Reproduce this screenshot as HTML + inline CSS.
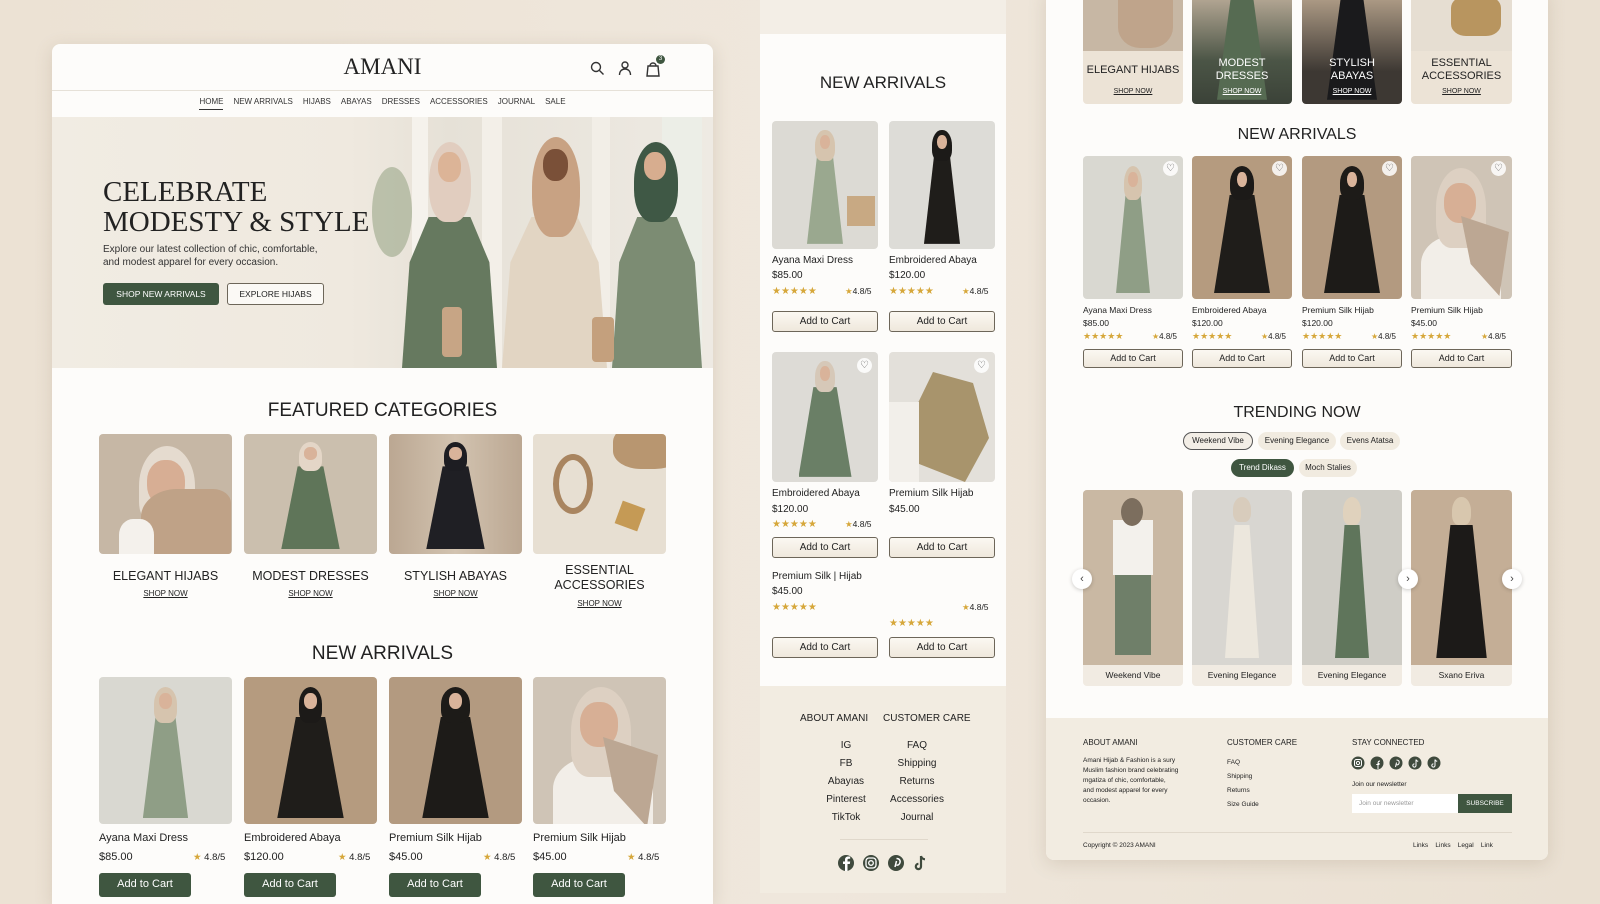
<!DOCTYPE html>
<html><head><meta charset="utf-8">
<style>
*{margin:0;padding:0;box-sizing:border-box}
body{width:1600px;height:893px;overflow:hidden;position:relative;background:linear-gradient(90deg,#ece2d4,#efe7dc 50%,#eae0d2);font-family:"Liberation Sans",sans-serif;color:#222}
.a{position:absolute}
.t{position:absolute;white-space:nowrap}
.c{text-align:center}
.panel{position:absolute;background:#fdfcfa;box-shadow:0 4px 18px rgba(120,100,70,.18)}
.img{position:absolute;overflow:hidden;border-radius:4px}
.img .d{position:absolute;left:33%;width:34%;top:27%;bottom:4%;clip-path:polygon(28% 0,72% 0,100% 100%,0 100%)}
.img .h{position:absolute;left:41%;width:18%;top:7%;height:24%;border-radius:50% 50% 35% 35%}
.img .f{position:absolute;left:45%;width:10%;top:11%;height:11%;border-radius:45%;background:#d9b39a}
.heart{position:absolute;width:15px;height:15px;border-radius:50%;background:rgba(255,255,255,.85);font-size:10px;line-height:15px;text-align:center;color:#555}
.star{color:#d6a73a}
.btn{position:absolute;border:1px solid #6d6659;border-radius:3px;background:linear-gradient(#fbf8f2,#efe8dc);font-size:10px;text-align:center}
.gbtn{position:absolute;background:#3f5640;color:#fff;border-radius:3px;text-align:center}
.nav span{margin:0 5px}
</style></head><body>

<!-- LEFT PANEL -->
<div class="panel" style="left:52px;top:44px;width:661px;height:860px;border-radius:8px 8px 0 0"></div>
<div class="t c" style="left:52px;width:661px;top:54px;font-family:'Liberation Serif',serif;font-size:23px;letter-spacing:0;color:#222">AMANI</div>
<svg class="a" style="left:590px;top:60px" width="75" height="18" viewBox="0 0 75 18" fill="none" stroke="#333" stroke-width="1.4"><circle cx="6" cy="7" r="4.5"/><path d="M9.5 10.5l4 4"/><circle cx="35" cy="5" r="3"/><path d="M29.5 15c0-4 2.5-6 5.5-6s5.5 2 5.5 6"/><path d="M58 6h10l1 10h-12z M60 6c0-4 6-4 6 0"/></svg>
<div class="a" style="left:656px;top:55px;width:9px;height:9px;border-radius:50%;background:#3f5640;color:#fff;font-size:6px;text-align:center;line-height:9px">3</div>
<div class="a" style="left:52px;top:90px;width:661px;height:1px;background:#e6e1d8"></div>
<div class="t c nav" style="left:52px;width:661px;top:97px;font-size:8px;color:#333"><span style="border-bottom:1px solid #333;padding-bottom:3px">HOME</span><span>NEW ARRIVALS</span><span>HIJABS</span><span>ABAYAS</span><span>DRESSES</span><span>ACCESSORIES</span><span>JOURNAL</span><span>SALE</span></div>
<!-- hero -->
<div class="a" style="left:52px;top:117px;width:661px;height:251px;background:linear-gradient(90deg,#f1ece3 0,#efe9df 45%,#e6e1d7 60%,#eeeae3 100%);overflow:hidden">
 <div class="a" style="left:360px;top:0;width:16px;height:251px;background:#f5f2ec"></div>
 <div class="a" style="left:430px;top:0;width:20px;height:251px;background:#f3efe8"></div>
 <div class="a" style="left:540px;top:0;width:18px;height:251px;background:#f2eee7"></div>
 <div class="a" style="left:610px;top:0;width:40px;height:251px;background:#eceee7"></div>
 <div class="a" style="left:320px;top:50px;width:40px;height:90px;background:#8a9a78;border-radius:50%;opacity:.5"></div>
 <div class="a" style="left:350px;top:100px;width:95px;height:151px;background:#66795f;clip-path:polygon(28% 0,72% 0,92% 30%,100% 100%,0 100%,8% 30%)"></div>
 <div class="a" style="left:377px;top:25px;width:42px;height:80px;background:#e1cdbf;border-radius:50% 50% 40% 40%"></div>
 <div class="a" style="left:386px;top:35px;width:23px;height:30px;background:#dcb497;border-radius:45%"></div>
 <div class="a" style="left:450px;top:100px;width:105px;height:151px;background:#e2d5c3;clip-path:polygon(28% 0,72% 0,92% 30%,100% 100%,0 100%,8% 30%)"></div>
 <div class="a" style="left:480px;top:20px;width:48px;height:100px;background:#c8a283;border-radius:50% 50% 40% 40%"></div>
 <div class="a" style="left:491px;top:32px;width:25px;height:32px;background:#7a5038;border-radius:45%"></div>
 <div class="a" style="left:560px;top:100px;width:90px;height:151px;background:#7c8c73;clip-path:polygon(28% 0,72% 0,92% 30%,100% 100%,0 100%,8% 30%)"></div>
 <div class="a" style="left:582px;top:25px;width:44px;height:80px;background:#3f5845;border-radius:50% 50% 40% 40%"></div>
 <div class="a" style="left:592px;top:35px;width:22px;height:28px;background:#d7ad8f;border-radius:45%"></div>
 <div class="a" style="left:390px;top:190px;width:20px;height:50px;background:#c7a585;border-radius:4px"></div>
 <div class="a" style="left:540px;top:200px;width:22px;height:45px;background:#c4a07d;border-radius:4px"></div>
</div>
<div class="t" style="left:103px;top:177px;font-family:'Liberation Serif',serif;font-size:29px;line-height:30px;color:#222">CELEBRATE<br>MODESTY &amp; STYLE</div>
<div class="t" style="left:103px;top:243px;font-size:10px;line-height:13px;color:#333">Explore our latest collection of chic, comfortable,<br>and modest apparel for every occasion.</div>
<div class="gbtn" style="left:103px;top:283px;width:116px;height:22px;font-size:8.5px;line-height:22px">SHOP NEW ARRIVALS</div>
<div class="a" style="left:227px;top:283px;width:97px;height:22px;border:1px solid #6d6659;border-radius:3px;background:#fbf9f5;font-size:8.5px;line-height:20px;text-align:center">EXPLORE HIJABS</div>

<div class="t c" style="left:52px;width:661px;top:400px;font-size:19px;color:#222">FEATURED CATEGORIES</div>
<div class="img" style="left:99px;top:434px;width:133px;height:120px;background:#c6b7a5"><div class="a" style="left:40px;top:12px;width:56px;height:80px;background:#e5dbcf;border-radius:50% 50% 30% 30%"></div><div class="a" style="left:48px;top:26px;width:38px;height:46px;background:#d7ae94;border-radius:45%"></div><div class="a" style="left:42px;top:55px;width:90px;height:70px;background:#bfa287;border-radius:40% 20% 0 0"></div><div class="a" style="left:20px;top:85px;width:35px;height:40px;background:#f4f1ec;border-radius:40% 40% 0 0"></div></div>
<div class="img" style="left:244px;top:434px;width:133px;height:120px;background:#cbbfae"><div class="d" style="background:#5f7559;left:28%;width:44%"></div><div class="h" style="background:#e4d6c7"></div><div class="f"></div></div>
<div class="img" style="left:389px;top:434px;width:133px;height:120px;background:linear-gradient(90deg,#bba792,#d2c3b0 50%,#bba792)"><div class="d" style="background:#1f1f24;left:28%;width:44%"></div><div class="h" style="background:#1d1d22"></div><div class="f"></div></div>
<div class="img" style="left:533px;top:434px;width:133px;height:120px;background:#e7dfd2"><div class="a" style="left:80px;top:-10px;width:70px;height:45px;background:#b89670;border-radius:40%"></div><div class="a" style="left:20px;top:20px;width:40px;height:60px;border:6px solid #a98560;border-radius:50%"></div><div class="a" style="left:85px;top:70px;width:24px;height:24px;background:#c59a55;transform:rotate(20deg)"></div></div>
<div class="t c" style="left:99px;width:133px;top:569px;font-size:12.5px">ELEGANT HIJABS</div>
<div class="t c" style="left:244px;width:133px;top:569px;font-size:12.5px">MODEST DRESSES</div>
<div class="t c" style="left:389px;width:133px;top:569px;font-size:12.5px">STYLISH ABAYAS</div>
<div class="t c" style="left:533px;width:133px;top:563px;font-size:12.5px;line-height:15px">ESSENTIAL<br>ACCESSORIES</div>
<div class="t c" style="left:99px;width:133px;top:589px;font-size:8px"><u>SHOP NOW</u></div>
<div class="t c" style="left:244px;width:133px;top:589px;font-size:8px"><u>SHOP NOW</u></div>
<div class="t c" style="left:389px;width:133px;top:589px;font-size:8px"><u>SHOP NOW</u></div>
<div class="t c" style="left:533px;width:133px;top:599px;font-size:8px"><u>SHOP NOW</u></div>

<div class="t c" style="left:52px;width:661px;top:643px;font-size:19px">NEW ARRIVALS</div>
<div class="img" style="left:99px;top:677px;width:133px;height:147px;background:#d9d8d1"><div class="d" style="background:#8f9e86"></div><div class="h" style="background:#d6c4ae"></div><div class="f"></div></div>
<div class="img" style="left:244px;top:677px;width:133px;height:147px;background:#b59b7f"><div class="d" style="background:#1f1d1a;left:25%;width:50%"></div><div class="h" style="background:#1c1a18"></div><div class="f"></div></div>
<div class="img" style="left:389px;top:677px;width:133px;height:147px;background:#b39a80"><div class="d" style="background:#1d1b18;left:25%;width:50%"></div><div class="h" style="background:#1d1b18;width:22%;left:39%"></div><div class="f"></div></div>
<div class="img" style="left:533px;top:677px;width:133px;height:147px;background:#cfc4b6"><div class="a" style="left:20px;top:80px;width:100px;height:80px;background:#f2eee8;border-radius:40% 40% 0 0"></div><div class="a" style="left:38px;top:10px;width:60px;height:90px;background:#ddd0c2;border-radius:50% 50% 30% 30%"></div><div class="a" style="left:47px;top:25px;width:38px;height:45px;background:#d7af95;border-radius:45%"></div><div class="a" style="left:70px;top:60px;width:55px;height:90px;background:#bca793;clip-path:polygon(0 0,100% 20%,80% 100%,20% 60%)"></div></div>
<div class="t" style="left:99px;top:832px;font-size:11px">Ayana Maxi Dress</div>
<div class="t" style="left:244px;top:832px;font-size:11px">Embroidered Abaya</div>
<div class="t" style="left:389px;top:832px;font-size:11px">Premium Silk Hijab</div>
<div class="t" style="left:533px;top:832px;font-size:11px">Premium Silk Hijab</div>
<div class="t" style="left:99px;top:851px;font-size:11px">$85.00</div><div class="t" style="left:193px;top:852px;font-size:9.5px"><span class="star">★</span> 4.8/5</div>
<div class="t" style="left:244px;top:851px;font-size:11px">$120.00</div><div class="t" style="left:338px;top:852px;font-size:9.5px"><span class="star">★</span> 4.8/5</div>
<div class="t" style="left:389px;top:851px;font-size:11px">$45.00</div><div class="t" style="left:483px;top:852px;font-size:9.5px"><span class="star">★</span> 4.8/5</div>
<div class="t" style="left:533px;top:851px;font-size:11px">$45.00</div><div class="t" style="left:627px;top:852px;font-size:9.5px"><span class="star">★</span> 4.8/5</div>
<div class="gbtn" style="left:99px;top:873px;width:92px;height:24px;font-size:11px;line-height:22px">Add to Cart</div>
<div class="gbtn" style="left:244px;top:873px;width:92px;height:24px;font-size:11px;line-height:22px">Add to Cart</div>
<div class="gbtn" style="left:389px;top:873px;width:92px;height:24px;font-size:11px;line-height:22px">Add to Cart</div>
<div class="gbtn" style="left:533px;top:873px;width:92px;height:24px;font-size:11px;line-height:22px">Add to Cart</div>

<!-- MIDDLE PANEL -->
<div class="a" style="left:760px;top:0;width:246px;height:34px;background:#f3eee6"></div>
<div class="a" style="left:760px;top:34px;width:246px;height:652px;background:#fdfcfa"></div>
<div class="a" style="left:760px;top:686px;width:246px;height:207px;background:#f2ece1"></div>
<div class="t c" style="left:760px;width:246px;top:73px;font-size:17px">NEW ARRIVALS</div>
<div class="img" style="left:772px;top:121px;width:106px;height:128px;background:#dcdad4"><div class="d" style="background:#9aa88f"></div><div class="h" style="background:#d6c4ae"></div><div class="f"></div><div class="a" style="left:75px;top:75px;width:28px;height:30px;background:#c8a983"></div></div>
<div class="img" style="left:889px;top:121px;width:106px;height:128px;background:#dddcd7"><div class="d" style="background:#1f1d1a"></div><div class="h" style="background:#1c1a18"></div><div class="f"></div></div>
<div class="t" style="left:772px;top:255px;font-size:10px">Ayana Maxi Dress</div>
<div class="t" style="left:889px;top:255px;font-size:10px">Embroidered Abaya</div>
<div class="t" style="left:772px;top:270px;font-size:10px">$85.00</div>
<div class="t" style="left:889px;top:270px;font-size:10px">$120.00</div>
<div class="t star" style="left:772px;top:286px;font-size:10px">★★★★★</div><div class="t" style="left:845px;top:286px;font-size:8.5px"><span class="star">★</span>4.8/5</div>
<div class="t star" style="left:889px;top:286px;font-size:10px">★★★★★</div><div class="t" style="left:962px;top:286px;font-size:8.5px"><span class="star">★</span>4.8/5</div>
<div class="btn" style="left:772px;top:311px;width:106px;height:21px;line-height:19px">Add to Cart</div>
<div class="btn" style="left:889px;top:311px;width:106px;height:21px;line-height:19px">Add to Cart</div>
<div class="img" style="left:772px;top:352px;width:106px;height:130px;background:#dddbd6"><div class="d" style="background:#6a7f66;left:25%;width:50%"></div><div class="h" style="background:#d6c8b8"></div><div class="f"></div></div>
<div class="img" style="left:889px;top:352px;width:106px;height:130px;background:#e3e0da"><div class="a" style="left:20px;top:20px;width:80px;height:110px;background:#a8946c;clip-path:polygon(30% 0,80% 10%,100% 60%,70% 100%,0 80%,10% 30%)"></div><div class="a" style="left:0;top:50px;width:30px;height:80px;background:#f2efea"></div></div>
<div class="heart" style="left:857px;top:358px">♡</div><div class="heart" style="left:974px;top:358px">♡</div>
<div class="t" style="left:772px;top:488px;font-size:10px">Embroidered Abaya</div>
<div class="t" style="left:889px;top:488px;font-size:10px">Premium Silk Hijab</div>
<div class="t" style="left:772px;top:504px;font-size:10px">$120.00</div>
<div class="t" style="left:889px;top:504px;font-size:10px">$45.00</div>
<div class="t star" style="left:772px;top:519px;font-size:10px">★★★★★</div><div class="t" style="left:845px;top:519px;font-size:8.5px"><span class="star">★</span>4.8/5</div>
<div class="btn" style="left:772px;top:537px;width:106px;height:21px;line-height:19px">Add to Cart</div>
<div class="btn" style="left:889px;top:537px;width:106px;height:21px;line-height:19px">Add to Cart</div>
<div class="t" style="left:772px;top:571px;font-size:10px">Premium Silk | Hijab</div>
<div class="t" style="left:772px;top:586px;font-size:10px">$45.00</div>
<div class="t star" style="left:772px;top:602px;font-size:10px">★★★★★</div>
<div class="t" style="left:962px;top:602px;font-size:8.5px"><span class="star">★</span>4.8/5</div>
<div class="t star" style="left:889px;top:618px;font-size:10px">★★★★★</div>
<div class="btn" style="left:772px;top:637px;width:106px;height:21px;line-height:19px">Add to Cart</div>
<div class="btn" style="left:889px;top:637px;width:106px;height:21px;line-height:19px">Add to Cart</div>
<div class="t" style="left:800px;top:713px;font-size:10px">ABOUT AMANI</div>
<div class="t" style="left:883px;top:713px;font-size:10px">CUSTOMER CARE</div>
<div class="t c" style="left:806px;width:80px;top:737px;font-size:10px;line-height:18px;white-space:normal">IG<br>FB<br>Abayıas<br>Pinterest<br>TikTok</div>
<div class="t c" style="left:877px;width:80px;top:737px;font-size:10px;line-height:18px;white-space:normal">FAQ<br>Shipping<br>Returns<br>Accessories<br>Journal</div>
<div class="a" style="left:840px;top:839px;width:88px;height:1px;background:#e0d8cb"></div>
<svg class="a" style="left:838px;top:854px" width="95" height="18" viewBox="0 0 95 18"><circle cx="8" cy="9" r="8" fill="#3f4a3d"/><path d="M9.5 17V10h2.3l.4-2.5H9.5V6c0-.7.3-1.2 1.3-1.2h1.4V2.6c-.3 0-1.1-.1-2-.1-2 0-3.2 1.2-3.2 3.3v1.7H5v2.5h2V17z" fill="#fff"/><circle cx="33" cy="9" r="8" fill="#3f4a3d"/><rect x="28" y="4" width="10" height="10" rx="3" fill="none" stroke="#fff" stroke-width="1.3"/><circle cx="33" cy="9" r="2.3" fill="none" stroke="#fff" stroke-width="1.3"/><circle cx="58" cy="9" r="8" fill="#3f4a3d"/><path d="M57 13l1.5-6M58.5 4.5c3 0 4 2 3.5 4s-2 3-3.5 2.5" fill="none" stroke="#fff" stroke-width="1.5"/><path d="M83 2v10.5a2.6 2.6 0 1 1-2.6-2.6M83 2c.5 2 2 3.2 4 3.3" fill="none" stroke="#3f4a3d" stroke-width="2.2"/></svg>

<!-- RIGHT PANEL -->
<div class="panel" style="left:1046px;top:-10px;width:502px;height:870px;border-radius:0 0 8px 8px"></div>
<div class="a" style="left:1046px;top:718px;width:502px;height:142px;background:#f2ece1;border-radius:0 0 8px 8px"></div>
<div class="img" style="left:1083px;top:-4px;width:100px;height:108px;background:#ece3d6"><div class="a" style="left:0;top:0;width:100px;height:55px;background:#c7b7a4"></div><div class="a" style="left:35px;top:0;width:55px;height:52px;background:#bfa48b;border-radius:0 0 40% 40%"></div></div>
<div class="img" style="left:1192px;top:-4px;width:100px;height:108px;background:linear-gradient(#b7a996,#4b5546 60%,#3b4238)"><div class="d" style="background:#566b52;left:25%;width:50%;top:0"></div></div>
<div class="img" style="left:1302px;top:-4px;width:100px;height:108px;background:linear-gradient(#b19e88,#3d3833 70%)"><div class="d" style="background:#1a1a1c;left:25%;width:50%;top:0"></div></div>
<div class="img" style="left:1411px;top:-4px;width:101px;height:108px;background:#ece3d6"><div class="a" style="left:0;top:0;width:101px;height:55px;background:#e6ded2"></div><div class="a" style="left:40px;top:0;width:50px;height:40px;background:#b8955f;border-radius:30%"></div></div>
<div class="t c" style="left:1083px;width:100px;top:64px;font-size:11px;color:#222">ELEGANT HIJABS</div>
<div class="t c" style="left:1192px;width:100px;top:57px;font-size:11px;line-height:13px;color:#fff">MODEST<br>DRESSES</div>
<div class="t c" style="left:1302px;width:100px;top:57px;font-size:11px;line-height:13px;color:#fff">STYLISH<br>ABAYAS</div>
<div class="t c" style="left:1411px;width:101px;top:57px;font-size:11px;line-height:13px">ESSENTIAL<br>ACCESSORIES</div>
<div class="t c" style="left:1083px;width:100px;top:88px;font-size:7px"><u>SHOP NOW</u></div>
<div class="t c" style="left:1192px;width:100px;top:88px;font-size:7px;color:#fff"><u>SHOP NOW</u></div>
<div class="t c" style="left:1302px;width:100px;top:88px;font-size:7px;color:#fff"><u>SHOP NOW</u></div>
<div class="t c" style="left:1411px;width:101px;top:88px;font-size:7px"><u>SHOP NOW</u></div>

<div class="t c" style="left:1046px;width:502px;top:126px;font-size:16px">NEW ARRIVALS</div>
<div class="img" style="left:1083px;top:156px;width:100px;height:143px;background:#d9d8d1"><div class="d" style="background:#8f9e86"></div><div class="h" style="background:#d6c4ae"></div><div class="f"></div></div>
<div class="img" style="left:1192px;top:156px;width:100px;height:143px;background:#b59b7f"><div class="d" style="background:#1f1d1a;left:22%;width:56%"></div><div class="h" style="background:#1c1a18;width:24%;left:38%"></div><div class="f"></div></div>
<div class="img" style="left:1302px;top:156px;width:100px;height:143px;background:#b39a80"><div class="d" style="background:#1d1b18;left:22%;width:56%"></div><div class="h" style="background:#1d1b18;width:24%;left:38%"></div><div class="f"></div></div>
<div class="img" style="left:1411px;top:156px;width:101px;height:143px;background:#cfc4b6"><div class="a" style="left:10px;top:80px;width:80px;height:70px;background:#f2eee8;border-radius:40% 40% 0 0"></div><div class="a" style="left:25px;top:12px;width:50px;height:80px;background:#ddd0c2;border-radius:50% 50% 30% 30%"></div><div class="a" style="left:33px;top:27px;width:32px;height:40px;background:#d7af95;border-radius:45%"></div><div class="a" style="left:50px;top:60px;width:48px;height:80px;background:#bca793;clip-path:polygon(0 0,100% 20%,80% 100%,20% 60%)"></div></div>
<div class="heart" style="left:1163px;top:161px">♡</div><div class="heart" style="left:1272px;top:161px">♡</div><div class="heart" style="left:1382px;top:161px">♡</div><div class="heart" style="left:1491px;top:161px">♡</div>
<div class="t" style="left:1083px;top:305px;font-size:8.5px">Ayana Maxi Dress</div>
<div class="t" style="left:1192px;top:305px;font-size:8.5px">Embroidered Abaya</div>
<div class="t" style="left:1302px;top:305px;font-size:8.5px">Premium Silk Hijab</div>
<div class="t" style="left:1411px;top:305px;font-size:8.5px">Premium Silk Hijab</div>
<div class="t" style="left:1083px;top:318px;font-size:8.5px">$85.00</div>
<div class="t" style="left:1192px;top:318px;font-size:8.5px">$120.00</div>
<div class="t" style="left:1302px;top:318px;font-size:8.5px">$120.00</div>
<div class="t" style="left:1411px;top:318px;font-size:8.5px">$45.00</div>
<div class="t star" style="left:1083px;top:331px;font-size:9px">★★★★★</div><div class="t" style="left:1152px;top:332px;font-size:8px"><span class="star">★</span>4.8/5</div>
<div class="t star" style="left:1192px;top:331px;font-size:9px">★★★★★</div><div class="t" style="left:1261px;top:332px;font-size:8px"><span class="star">★</span>4.8/5</div>
<div class="t star" style="left:1302px;top:331px;font-size:9px">★★★★★</div><div class="t" style="left:1371px;top:332px;font-size:8px"><span class="star">★</span>4.8/5</div>
<div class="t star" style="left:1411px;top:331px;font-size:9px">★★★★★</div><div class="t" style="left:1481px;top:332px;font-size:8px"><span class="star">★</span>4.8/5</div>
<div class="btn" style="left:1083px;top:349px;width:100px;height:19px;line-height:17px;font-size:9px">Add to Cart</div>
<div class="btn" style="left:1192px;top:349px;width:100px;height:19px;line-height:17px;font-size:9px">Add to Cart</div>
<div class="btn" style="left:1302px;top:349px;width:100px;height:19px;line-height:17px;font-size:9px">Add to Cart</div>
<div class="btn" style="left:1411px;top:349px;width:101px;height:19px;line-height:17px;font-size:9px">Add to Cart</div>

<div class="t c" style="left:1046px;width:502px;top:404px;font-size:16px">TRENDING NOW</div>
<div class="a" style="left:1183px;top:432px;width:70px;height:18px;border:1px solid #555;border-radius:9px;background:#f3eee6;font-size:8px;line-height:16px;text-align:center">Weekend Vibe</div>
<div class="a" style="left:1258px;top:432px;width:78px;height:18px;border-radius:9px;background:#f1ebe0;font-size:8px;line-height:18px;text-align:center">Evening Elegance</div>
<div class="a" style="left:1340px;top:432px;width:60px;height:18px;border-radius:9px;background:#f1ebe0;font-size:8px;line-height:18px;text-align:center">Evens Atatsa</div>
<div class="a" style="left:1231px;top:459px;width:63px;height:18px;border-radius:9px;background:#3f5640;color:#fff;font-size:8px;line-height:18px;text-align:center">Trend Dikass</div>
<div class="a" style="left:1299px;top:459px;width:58px;height:18px;border-radius:9px;background:#f1ebe0;font-size:8px;line-height:18px;text-align:center">Moch Stalies</div>

<div class="img" style="left:1083px;top:490px;width:100px;height:196px;background:#f1ebe2"><div class="a" style="left:0;top:0;width:100px;height:175px;background:#c9b8a3"><div class="a" style="left:30px;top:30px;width:40px;height:55px;background:#f3f1ec"></div><div class="a" style="left:32px;top:85px;width:36px;height:80px;background:#6f7f69"></div><div class="a" style="left:38px;top:8px;width:22px;height:28px;background:#7c6e5e;border-radius:50%"></div></div></div>
<div class="img" style="left:1192px;top:490px;width:100px;height:196px;background:#f1ebe2"><div class="a" style="left:0;top:0;width:100px;height:175px;background:#d8d6d1"><div class="d" style="background:#ece7dd;top:20%"></div><div class="h" style="background:#d8ccbc;top:4%;height:14%"></div></div></div>
<div class="img" style="left:1302px;top:490px;width:100px;height:196px;background:#f1ebe2"><div class="a" style="left:0;top:0;width:100px;height:175px;background:#cfcdc6"><div class="d" style="background:#5f755b;top:20%"></div><div class="h" style="background:#e0d2bd;top:4%;height:16%"></div></div></div>
<div class="img" style="left:1411px;top:490px;width:101px;height:196px;background:#f1ebe2"><div class="a" style="left:0;top:0;width:101px;height:175px;background:#c4ae96"><div class="d" style="background:#1c1a18;top:20%;left:25%;width:50%"></div><div class="h" style="background:#d8c7ae;top:4%;height:16%"></div></div></div>
<div class="t c" style="left:1083px;width:100px;top:670px;font-size:8.5px">Weekend Vibe</div>
<div class="t c" style="left:1192px;width:100px;top:670px;font-size:8.5px">Evening Elegance</div>
<div class="t c" style="left:1302px;width:100px;top:670px;font-size:8.5px">Evening Elegance</div>
<div class="t c" style="left:1411px;width:101px;top:670px;font-size:8.5px">Sxano Eriva</div>
<div class="a" style="left:1072px;top:569px;width:20px;height:20px;border-radius:50%;background:#fff;box-shadow:0 1px 4px rgba(0,0,0,.2);font-size:11px;line-height:20px;text-align:center;color:#444">‹</div>
<div class="a" style="left:1398px;top:569px;width:20px;height:20px;border-radius:50%;background:#fff;box-shadow:0 1px 4px rgba(0,0,0,.2);font-size:11px;line-height:20px;text-align:center;color:#444">›</div>
<div class="a" style="left:1502px;top:569px;width:20px;height:20px;border-radius:50%;background:#fff;box-shadow:0 1px 4px rgba(0,0,0,.2);font-size:11px;line-height:20px;text-align:center;color:#444">›</div>

<div class="t" style="left:1083px;top:738px;font-size:8px">ABOUT AMANI</div>
<div class="t" style="left:1083px;top:756px;font-size:6.5px;line-height:10px">Amani Hijab &amp; Fashion is a sury<br>Muslim fashion brand celebrating<br>mgatiza of chic, comfortable,<br>and modest apparel for every<br>occasion.</div>
<div class="t" style="left:1227px;top:738px;font-size:8px">CUSTOMER CARE</div>
<div class="t" style="left:1227px;top:756px;font-size:6.5px;line-height:14px">FAQ<br>Shipping<br>Returns<br>Size Guide</div>
<div class="t" style="left:1352px;top:738px;font-size:8px">STAY CONNECTED</div>
<svg class="a" style="left:1351px;top:756px" width="92" height="14" viewBox="0 0 92 14"><g fill="#3f4a3d"><circle cx="7" cy="7" r="6.5"/><circle cx="26" cy="7" r="6.5"/><circle cx="45" cy="7" r="6.5"/><circle cx="64" cy="7" r="6.5"/><circle cx="83" cy="7" r="6.5"/></g><g fill="none" stroke="#fff" stroke-width="1"><rect x="3.5" y="3.5" width="7" height="7" rx="2"/><circle cx="7" cy="7" r="1.6"/><path d="M27 13V7.5h1.6M25.3 8.5h3.2M27 7.5c0-1.8.5-2.5 2-2.5"/><path d="M44.5 11l1-4.5M45.5 4c2 0 3 1.3 2.6 3s-1.5 2-2.6 1.8"/><path d="M65 3.5v6a1.6 1.6 0 1 1-1.6-1.6M65 3.5c.3 1 1 1.7 2.2 1.8"/><path d="M84 3.5v6a1.6 1.6 0 1 1-1.6-1.6M84 3.5c.3 1 1 1.7 2.2 1.8"/></g></svg>
<div class="t" style="left:1352px;top:781px;font-size:6.5px">Join our newsletter</div>
<div class="a" style="left:1352px;top:794px;width:106px;height:19px;background:#fff;font-size:6.5px;color:#999;line-height:19px;padding-left:7px">Join our newsletter</div>
<div class="a" style="left:1458px;top:794px;width:54px;height:19px;background:#3f5640;color:#fff;font-size:6.5px;line-height:19px;text-align:center">SUBSCRIBE</div>
<div class="a" style="left:1083px;top:832px;width:429px;height:1px;background:#e0d8cb"></div>
<div class="t" style="left:1083px;top:842px;font-size:6.5px">Copyright © 2023 AMANI</div>
<div class="t" style="left:1413px;top:842px;font-size:6.5px;word-spacing:0">Links&nbsp;&nbsp;&nbsp;&nbsp;Links&nbsp;&nbsp;&nbsp;&nbsp;Legal&nbsp;&nbsp;&nbsp;&nbsp;Link</div>
</body></html>
